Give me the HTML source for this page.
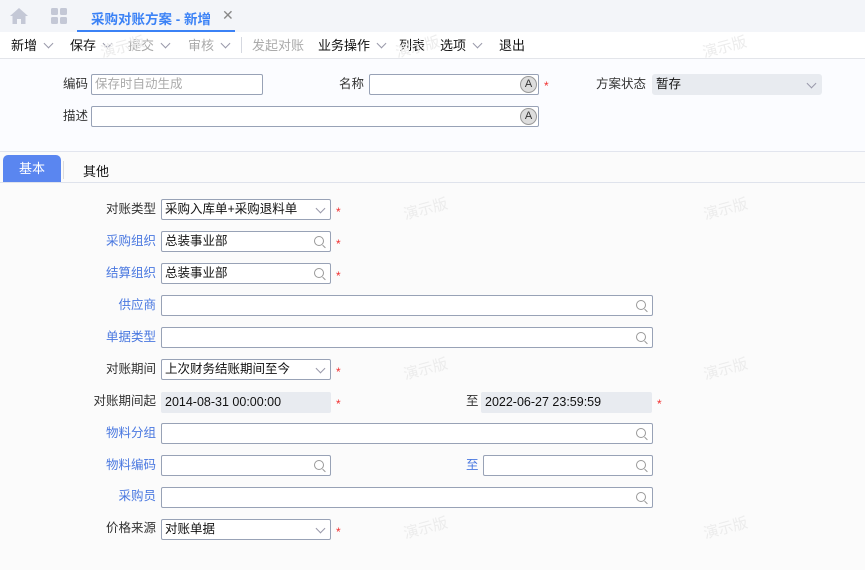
<!DOCTYPE html>
<html><head><meta charset="utf-8">
<style>
*{margin:0;padding:0;box-sizing:border-box}
body{width:865px;height:570px;overflow:hidden;background:#fbfbfb;font-family:"Liberation Sans","Noto Sans CJK SC",sans-serif;font-size:12px;color:#222;position:relative}
.a{position:absolute}
.tabbar{left:0;top:0;width:865px;height:32px;background:#f3f5f9}
.tool{left:0;top:32px;width:865px;height:27px;background:#fff;border-bottom:1px solid #e3e5ea}
.tool span{position:absolute;top:5px;font-size:13px;color:#111;line-height:18px}
.tool .dis{color:#aaa}
.chev{display:inline-block;width:7px;height:7px;border-right:1px solid #99a;border-bottom:1px solid #99a;transform:rotate(45deg);margin-left:8px;position:relative;top:-3px}
.head{left:0;top:59px;width:865px;height:93px;background:#fbfcff;border-bottom:1px solid #e2e5ee}
.lbl{font-size:12.5px;color:#333;text-align:right;width:90px;line-height:17px}
.blue{color:#4a78e0}
.inp{height:21px;border:1px solid #98a2b6;border-radius:2px;background:#fff;font-size:12.5px;padding:0 3px;line-height:19px;color:#111;white-space:nowrap}
.ro{background:#e8ebf0;border-color:#e8ebf0}
.star{color:#f03030;font-size:12px;line-height:14px}
.sel::after{content:"";position:absolute;right:6px;top:5px;width:6px;height:6px;border-right:1px solid #99a;border-bottom:1px solid #99a;transform:rotate(45deg)}
.srch::after{content:"";position:absolute;right:6px;top:4px;width:8px;height:8px;border:1px solid #999;border-radius:50%}
.srch::before{content:"";position:absolute;right:4px;top:14px;width:4px;height:1px;background:#999;transform:rotate(45deg)}
.ab{position:absolute;right:1px;top:1px;width:17px;height:17px;border-radius:50%;background:#ddd;border:1px solid #999;font-size:11px;text-align:center;line-height:15px;color:#333;font-style:normal}
.wm{color:#ececec;font-size:15px;transform:rotate(-15deg)}
</style></head><body>
<div class="a tabbar">
 <svg class="a" style="left:10px;top:8px" width="18" height="16"><path d="M9 0L0 8h2.5v8h4.5v-5h4v5h4.5V8H18z" fill="#c4c8d6"/></svg>
 <svg class="a" style="left:51px;top:8px" width="16" height="16"><rect x="0" y="0" width="7" height="7" rx="1.5" fill="#c4c8d6"/><rect x="9" y="0" width="7" height="7" rx="1.5" fill="#c4c8d6"/><rect x="0" y="9" width="7" height="7" rx="1.5" fill="#c4c8d6"/><rect x="9" y="9" width="7" height="7" rx="1.5" fill="#c4c8d6"/></svg>
 <div class="a" style="left:77px;top:0;width:158px;height:32px;border-bottom:2px solid #3b82f6"></div>
 <span class="a" style="left:91px;top:8px;font-size:13.5px;color:#3b82f6;font-weight:bold">采购对账方案 - 新增</span>
 <span class="a" style="left:222px;top:7px;font-size:14px;color:#888">✕</span>
</div>
<div class="a tool">
 <span style="left:11px">新增<i class="chev"></i></span>
 <span style="left:70px">保存<i class="chev"></i></span>
 <span class="dis" style="left:128px">提交<i class="chev"></i></span>
 <span class="dis" style="left:188px">审核<i class="chev"></i></span>
 <div class="a" style="left:241px;top:5px;width:1px;height:16px;background:#d5d8e0"></div>
 <span class="dis" style="left:252px">发起对账</span>
 <span style="left:318px">业务操作<i class="chev"></i></span>
 <span style="left:399px">列表</span>
 <span style="left:440px">选项<i class="chev"></i></span>
 <span style="left:499px">退出</span>
</div>
<div class="a head"></div>
<span class="a wm" style="left:100px;top:36px">演示版</span>
<span class="a wm" style="left:395px;top:36px">演示版</span>
<span class="a wm" style="left:702px;top:36px">演示版</span>

<span class="a lbl" style="left:-2px;top:76px">编码</span>
<div class="a inp" style="left:91px;top:74px;width:172px;color:#aaa">保存时自动生成</div>
<span class="a lbl" style="left:274px;top:76px">名称</span>
<div class="a inp" style="left:369px;top:74px;width:170px"><i class="ab">A</i></div>
<span class="a star" style="left:544px;top:79px">*</span>
<span class="a lbl" style="left:556px;top:76px">方案状态</span>
<div class="a inp ro sel" style="left:652px;top:74px;width:170px;border-radius:3px">暂存</div>
<span class="a lbl" style="left:-2px;top:108px">描述</span>
<div class="a inp" style="left:91px;top:106px;width:448px"><i class="ab">A</i></div>

<div class="a" style="left:0;top:182px;width:865px;height:1px;background:#dfe3ec"></div>
<div class="a" style="left:3px;top:155px;width:58px;height:27px;background:#5a86f0;border-radius:5px 5px 0 0;color:#fff;font-size:13px;text-align:center;line-height:28px">基本</div>
<div class="a" style="left:63px;top:161px;width:1px;height:18px;background:#ddd"></div>
<span class="a" style="left:83px;top:161px;font-size:13px;color:#111">其他</span>

<span class="a wm" style="left:403px;top:198px">演示版</span>
<span class="a wm" style="left:703px;top:198px">演示版</span>
<span class="a wm" style="left:403px;top:358px">演示版</span>
<span class="a wm" style="left:703px;top:358px">演示版</span>
<span class="a wm" style="left:403px;top:517px">演示版</span>
<span class="a wm" style="left:703px;top:517px">演示版</span>

<span class="a lbl" style="left:66px;top:201px">对账类型</span>
<div class="a inp sel" style="left:161px;top:199px;width:170px">采购入库单+采购退料单</div>
<span class="a star" style="left:336px;top:205px">*</span>

<span class="a lbl blue" style="left:66px;top:233px">采购组织</span>
<div class="a inp srch" style="left:161px;top:231px;width:170px">总装事业部</div>
<span class="a star" style="left:336px;top:237px">*</span>

<span class="a lbl blue" style="left:66px;top:265px">结算组织</span>
<div class="a inp srch" style="left:161px;top:263px;width:170px">总装事业部</div>
<span class="a star" style="left:336px;top:269px">*</span>

<span class="a lbl blue" style="left:66px;top:297px">供应商</span>
<div class="a inp srch" style="left:161px;top:295px;width:492px"></div>

<span class="a lbl blue" style="left:66px;top:329px">单据类型</span>
<div class="a inp srch" style="left:161px;top:327px;width:492px"></div>

<span class="a lbl" style="left:66px;top:361px">对账期间</span>
<div class="a inp sel" style="left:161px;top:359px;width:170px">上次财务结账期间至今</div>
<span class="a star" style="left:336px;top:365px">*</span>

<span class="a lbl" style="left:66px;top:393px">对账期间起</span>
<div class="a inp ro" style="left:161px;top:392px;width:170px">2014-08-31 00:00:00</div>
<span class="a star" style="left:336px;top:397px">*</span>
<span class="a" style="left:466px;top:393px;font-size:12.5px;color:#333;line-height:17px">至</span>
<div class="a inp ro" style="left:481px;top:392px;width:171px">2022-06-27 23:59:59</div>
<span class="a star" style="left:657px;top:397px">*</span>

<span class="a lbl blue" style="left:66px;top:425px">物料分组</span>
<div class="a inp srch" style="left:161px;top:423px;width:492px"></div>

<span class="a lbl blue" style="left:66px;top:457px">物料编码</span>
<div class="a inp srch" style="left:161px;top:455px;width:170px"></div>
<span class="a blue" style="left:466px;top:457px;font-size:12.5px;line-height:17px">至</span>
<div class="a inp srch" style="left:483px;top:455px;width:170px"></div>

<span class="a lbl blue" style="left:66px;top:488px">采购员</span>
<div class="a inp srch" style="left:161px;top:487px;width:492px"></div>

<span class="a lbl" style="left:66px;top:520px">价格来源</span>
<div class="a inp sel" style="left:161px;top:519px;width:170px">对账单据</div>
<span class="a star" style="left:336px;top:525px">*</span>
</body></html>
